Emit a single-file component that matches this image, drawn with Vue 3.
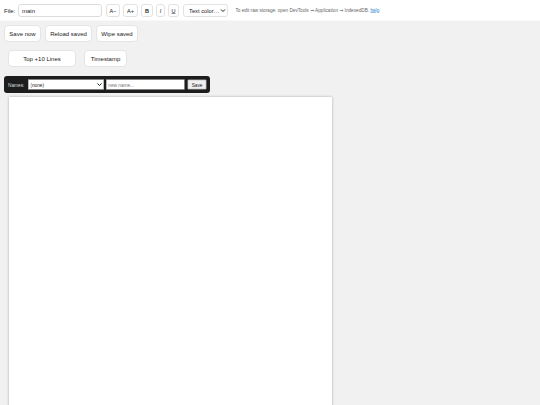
<script setup>
import { ref } from 'vue'

const fileName = ref('main')
const newName = ref('')
</script>

<template>
  <div class="frame">
    <div class="app">
      <div class="topbar">
        <label class="file-label">File:</label>
        <input v-model="fileName" class="file-input" type="text" />
        <div class="format-btns">
          <button type="button" class="tool smaller">A−</button>
          <button type="button" class="tool bigger">A+</button>
          <button type="button" class="tool bold">B</button>
          <button type="button" class="tool italic">I</button>
          <button type="button" class="tool under">U</button>
        </div>
        <select class="color-select">
          <option>Text color…</option>
        </select>
        <span class="hint">To edit raw storage: open DevTools <span class="arrow">→</span> Application <span class="arrow">→</span> IndexedDB. <a href="#">help</a></span>
      </div>

      <div class="actions">
        <button type="button" class="btn save">Save now</button>
        <button type="button" class="btn reload">Reload saved</button>
        <button type="button" class="btn wipe">Wipe saved</button>
      </div>

      <div class="actions second">
        <button type="button" class="btn top-lines">Top +10 Lines</button>
        <button type="button" class="btn stamp">Timestamp</button>
      </div>

      <div class="names-bar">
        <label>Names:</label>
        <select class="names-select">
          <option>(none)</option>
        </select>
        <input v-model="newName" class="names-input" type="text" placeholder="new name..." />
        <button type="button" class="names-save">Save</button>
      </div>

      <div class="page"></div>
    </div>
  </div>
</template>

<style>
html, body {
  margin: 0;
  height: 100%;
  overflow: hidden;
  background: #f1f1f1;
}
</style>

<style scoped>
.frame {
  width: 540px;
  height: 405px;
  overflow: hidden;
}

/* page is laid out at 1080 wide and shown at half size */
.app {
  width: 1080px;
  height: 810px;
  overflow: hidden;
  transform: scale(0.5);
  transform-origin: 0 0;
  font-family: "Liberation Sans", Arial, sans-serif;
  color: #222;
  background: #f1f1f1;
}

.topbar {
  display: flex;
  align-items: center;
  height: 41px;
  padding-left: 8px;
  background: #fff;
}

.file-label { width: 28px; font-size: 12px; }

.file-input {
  box-sizing: border-box;
  width: 168px;
  height: 26px;
  padding: 0 6px;
  border: 2px solid #dcdcdc;
  border-radius: 6px;
  font: 12px "Liberation Sans", Arial, sans-serif;
  color: #222;
}

.format-btns {
  display: flex;
  gap: 6px;
  margin-left: 8px;
}

.tool {
  box-sizing: border-box;
  height: 26px;
  padding: 0;
  border: 2px solid #e2e2e2;
  border-radius: 6px;
  background: #fff;
  font: 11px "Liberation Sans", Arial, sans-serif;
  color: #222;
}

.smaller { width: 28px; }
.bigger { width: 30px; }
.bold { width: 24px; font-weight: 700; }
.italic { width: 18px; font-style: italic; }
.under { width: 22px; text-decoration: underline; }

.color-select {
  box-sizing: border-box;
  width: 90px;
  height: 26px;
  margin-left: 8px;
  padding: 0 0 0 6px;
  border: 2px solid #e2e2e2;
  border-radius: 6px;
  background: #fff;
  font: 11.5px "Liberation Sans", Arial, sans-serif;
  color: #222;
}

.hint {
  margin-left: 15px;
  font-size: 9.4px;
  color: #666;
  white-space: nowrap;
}

.hint .arrow {
  font-family: "DejaVu Sans", sans-serif;
  font-size: 9.5px;
  color: #444;
}

.hint a { color: #2a7fd0; }

.actions {
  display: flex;
  gap: 8px;
  padding: 9px 0 0 8px;
}

.second {
  gap: 16px;
  padding: 16px 0 0 16px;
}

.btn {
  box-sizing: border-box;
  height: 34px;
  padding: 0;
  border: 2px solid #e4e4e4;
  border-radius: 8px;
  background: #fff;
  font: 12px "Liberation Sans", Arial, sans-serif;
  color: #222;
}

.save { width: 74px; }
.reload { width: 94px; }
.wipe { width: 84px; }
.top-lines { width: 136px; }
.stamp { width: 86px; }

.names-bar {
  box-sizing: border-box;
  display: flex;
  align-items: center;
  gap: 4px;
  width: 412px;
  height: 34px;
  margin: 18px 0 0 8px;
  padding: 0 7px 0 8px;
  border-radius: 6px;
  background: #1d1d1d;
  color: #ddd;
  font-size: 9.5px;
}

.names-bar label { width: 38px; margin-right: -2px; }

.names-select {
  box-sizing: border-box;
  width: 154px;
  height: 20px;
  padding: 0;
  border: 1px solid #777;
  background: #fff;
  font: 9.5px "Liberation Sans", Arial, sans-serif;
  color: #222;
}

.names-input {
  box-sizing: border-box;
  width: 158px;
  height: 20px;
  padding: 0 3px;
  border: 1px solid #777;
  background: #fff;
  font: 9.5px "Liberation Sans", Arial, sans-serif;
}

.names-save {
  box-sizing: border-box;
  width: 38px;
  height: 20px;
  margin-left: 2px;
  padding: 0;
  border: 1px solid #777;
  border-radius: 2px;
  background: #efefef;
  font: 9.5px "Liberation Sans", Arial, sans-serif;
  color: #222;
}

.page {
  width: 646px;
  height: 840px;
  margin: 8px 0 0 18px;
  background: #fff;
  box-shadow: 0 0 5px rgba(0, 0, 0, 0.3);
}
</style>
